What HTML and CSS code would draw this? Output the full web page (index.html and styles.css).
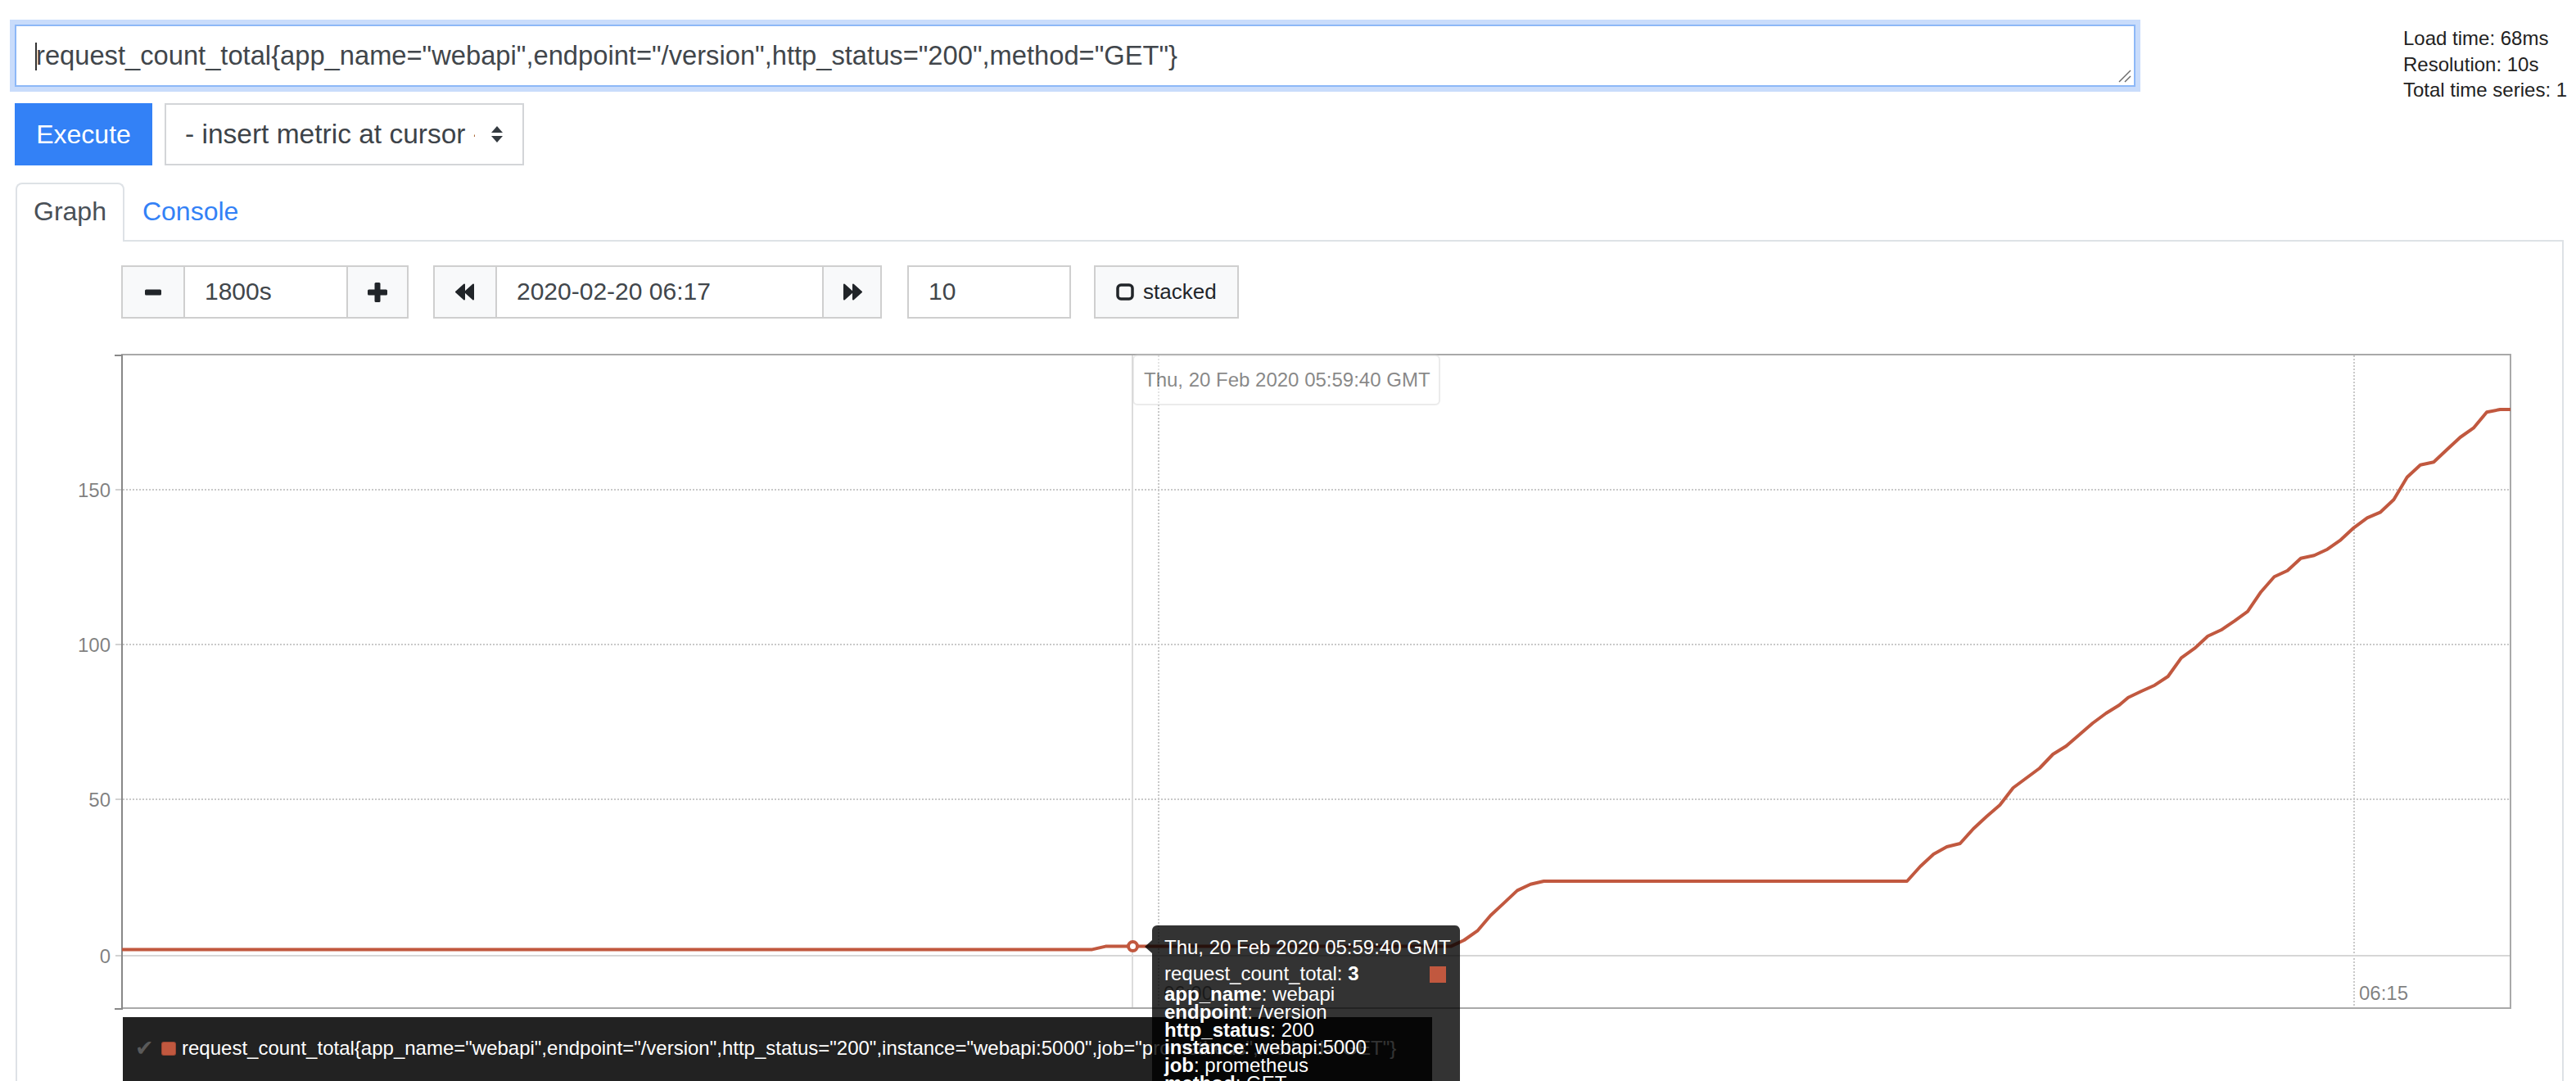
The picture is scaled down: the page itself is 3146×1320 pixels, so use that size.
FILE: index.html
```html
<!DOCTYPE html>
<html>
<head>
<meta charset="utf-8">
<title>Prometheus Time Series Collection and Processing Server</title>
<link rel="stylesheet" href="styles.css">
</head>
<body>
<div class="page">
  <div class="query-row">
    <div class="query-col">
      <div class="expr"><span class="caret"></span>request_count_total{app_name="webapi",endpoint="/version",http_status="200",method="GET"}<svg class="grip" width="18" height="18" viewBox="0 0 18 18"><line x1="2" y1="16" x2="16" y2="2" stroke="#6b6b6b" stroke-width="1.5"/><line x1="9" y1="16" x2="16" y2="9" stroke="#6b6b6b" stroke-width="1.5"/></svg></div>
      <div class="exec-row">
        <button class="btn-exec">Execute</button>
        <div class="metric-select">
          <span class="select-text">- insert metric at cursor -</span>
          <svg class="select-arrows" width="14" height="20" viewBox="0 0 14 20"><polygon points="7,0 14,8 0,8" fill="#343a40"/><polygon points="0,12 14,12 7,20" fill="#343a40"/></svg>
        </div>
      </div>
    </div>
    <div class="stats">
      <div>Load time: 68ms</div>
      <div>Resolution: 10s</div>
      <div>Total time series: 1</div>
    </div>
  </div>

  <div class="tabs">
    <div class="tab active">Graph</div>
    <div class="tab">Console</div>
  </div>

  <div class="tab-content">
    <div class="controls">
      <div class="group">
        <div class="ctl-btn btn-minus"><svg width="20" height="8" viewBox="0 0 20 8"><rect width="20" height="7" y="0.5" rx="1.5" fill="#212529"/></svg></div>
        <div class="ctl-input in-range">1800s</div>
        <div class="ctl-btn btn-plus"><svg width="24" height="24" viewBox="0 0 24 24"><rect x="8.5" y="0" width="7" height="24" rx="1.5" fill="#212529"/><rect x="0" y="8.5" width="24" height="7" rx="1.5" fill="#212529"/></svg></div>
      </div>
      <div class="group group-time">
        <div class="ctl-btn btn-back"><svg width="24" height="21" viewBox="0 0 24 21"><path d="M1 10.5 L11 1.5 L11 19.5 Z M12 10.5 L22 1.5 L22 19.5 Z" fill="#212529" stroke="#212529" stroke-width="2" stroke-linejoin="round"/></svg></div>
        <div class="ctl-input in-date">2020-02-20 06:17</div>
        <div class="ctl-btn btn-fwd"><svg width="24" height="21" viewBox="0 0 24 21"><path d="M23 10.5 L13 1.5 L13 19.5 Z M12 10.5 L2 1.5 L2 19.5 Z" fill="#212529" stroke="#212529" stroke-width="2" stroke-linejoin="round"/></svg></div>
      </div>
      <div class="ctl-input in-res">10</div>
      <div class="btn-stacked"><svg width="22" height="21" viewBox="0 0 22 21"><rect x="2" y="2" width="18" height="17" rx="4" fill="none" stroke="#212529" stroke-width="3.5"/></svg><span>stacked</span></div>
    </div>

    <div class="chart">
      <svg class="plot" width="3108" height="815" viewBox="21 420 3108 815">
        <rect x="149" y="433" width="2917" height="798" fill="none" stroke="#a9a9a9" stroke-width="2"/>
        <g stroke="#c9c9c9" stroke-width="2" stroke-dasharray="2 2">
          <line x1="150" y1="598" x2="3065" y2="598"/>
          <line x1="150" y1="787" x2="3065" y2="787"/>
          <line x1="150" y1="976" x2="3065" y2="976"/>
          <line x1="1415" y1="434" x2="1415" y2="1230"/>
          <line x1="2875" y1="434" x2="2875" y2="1230"/>
        </g>
        <line x1="150" y1="1167" x2="3065" y2="1167" stroke="#d6d6d6" stroke-width="2"/>
        <line x1="1383" y1="434" x2="1383" y2="1230" stroke="#dcdcdc" stroke-width="2"/>
        <g stroke="#d2d2d2" stroke-width="2">
          <line x1="141" y1="598" x2="149" y2="598"/>
          <line x1="141" y1="787" x2="149" y2="787"/>
          <line x1="141" y1="976" x2="149" y2="976"/>
          <line x1="141" y1="1167" x2="149" y2="1167"/>
        </g>
        <g stroke="#888" stroke-width="2">
          <line x1="149" y1="433" x2="149" y2="1233"/>
          <line x1="140" y1="434" x2="149" y2="434"/>
          <line x1="140" y1="1232" x2="149" y2="1232"/>
        </g>
        <g class="ylab" text-anchor="end">
          <text x="135" y="606.6">150</text>
          <text x="135" y="795.6">100</text>
          <text x="135" y="984.6">50</text>
          <text x="135" y="1175.6">0</text>
        </g>
        <g class="xlab">
          <text x="1421" y="1221">06:00</text>
          <text x="2881" y="1221">06:15</text>
        </g>
        <polyline fill="none" stroke="#c1583f" stroke-width="4" stroke-linejoin="round" points="149,1159.4 1333.9,1159.4 1350.2,1155.6 1771.9,1155.6 1788.1,1148 1804.3,1136.7 1820.5,1117.7 1836.8,1102.6 1853,1087.4 1869.2,1079.8 1885.4,1076 2329,1076 2345.2,1058 2361.4,1043 2377.6,1034 2393.8,1030 2410,1012 2426.2,997 2442.4,983 2458.6,962 2474.8,950 2491,938 2507.2,921 2523.4,911 2539.6,897 2555.8,883 2572,871 2588.2,861 2599.1,851.7 2615.3,844 2631.5,836.7 2647.7,826 2663.9,803.3 2680.2,791.7 2696.4,776.7 2712.6,769.3 2728.8,758.3 2745,746.7 2761.3,722.7 2777.5,704.3 2793.7,696.7 2809.9,681.7 2826.2,678.3 2842.4,670.7 2858.6,659.3 2874.8,644.3 2891,632.3 2907.3,625.3 2923.5,610 2939.7,582.7 2955.9,567.7 2972.2,564.3 2988.4,549 3004.6,534 3020.8,522.7 3037,503.3 3053.3,500 3066,500"/>
      </svg>

      <div class="legend"><span class="check">✔</span><span class="lswatch"></span><span class="ltext">request_count_total{app_name="webapi",endpoint="/version",http_status="200",instance="webapi:5000",job="prometheus",method="GET"}</span></div>

      <div class="x-label">Thu, 20 Feb 2020 05:59:40 GMT</div>
      <div class="dot"></div>
      <div class="tip">
        <div class="tip-arrow"></div>
        <div class="tip-date">Thu, 20 Feb 2020 05:59:40 GMT</div>
        <div class="tip-series"><span class="tip-swatch"></span>request_count_total: <b>3</b></div>
        <div class="tip-labels">
          <div><b>app_name</b>: webapi</div>
          <div><b>endpoint</b>: /version</div>
          <div><b>http_status</b>: 200</div>
          <div><b>instance</b>: webapi:5000</div>
          <div><b>job</b>: prometheus</div>
          <div><b>method</b>: GET</div>
        </div>
      </div>
    </div>
  </div>
</div>
</body>
</html>
```

FILE: styles.css
```css
* { box-sizing: border-box; }
html, body { margin: 0; padding: 0; background: #fff; }
body {
  font-family: "Liberation Sans", Arial, sans-serif;
  color: #212529;
  overflow: hidden;
}
.page { padding: 30px 15px 0 18px; }

/* query */
.query-row { display: flex; align-items: flex-start; }
.query-col { width: 2590px; flex: none; }
.expr {
  position: relative;
  height: 76px;
  border: 2px solid #8db8f7;
  box-shadow: 0 0 0 6px #c9dcfb;
  padding: 12px 24px;
  font-size: 32.7px;
  line-height: 48px;
  color: #41464b;
  white-space: nowrap;
  overflow: hidden;
}
.caret {
  position: absolute;
  left: 23px;
  top: 20px;
  width: 2px;
  height: 34px;
  background: #333;
}
.grip { position: absolute; right: 2px; bottom: 2px; }

.exec-row { display: flex; margin-top: 20px; height: 76px; }
.btn-exec {
  width: 168px;
  height: 76px;
  padding: 0;
  border: 0;
  border-radius: 0;
  background: #3381f6;
  color: #fff;
  font-family: "Liberation Sans", Arial, sans-serif;
  font-size: 32px;
}
.metric-select {
  margin-left: 15px;
  width: 439px;
  height: 76px;
  border: 2px solid #d3d5d8;
  display: flex;
  align-items: center;
  padding-left: 23px;
  font-size: 33.5px;
  color: #3d4349;
}
.select-text { width: 354px; overflow: hidden; white-space: nowrap; flex: none; }
.select-arrows { margin-left: 20px; flex: none; }

.stats {
  margin-left: 327px;
  margin-top: 1px;
  font-size: 24px;
  line-height: 31.5px;
  color: #222;
  white-space: nowrap;
}

/* tabs */
.tabs {
  display: flex;
  margin: 21px 0 0 1px;
  height: 72px;
  border-bottom: 2px solid #dee2e6;
}
.tab {
  height: 72px;
  padding: 0 20px;
  border: 2px solid transparent;
  border-bottom: 0;
  border-radius: 8px 8px 0 0;
  font-size: 32px;
  line-height: 66px;
  color: #3381f6;
}
.tab.active {
  border-color: #dee2e6;
  background: #fff;
  color: #495057;
  margin-bottom: -2px;
  position: relative;
}
.tab-content {
  margin-left: 1px;
  border-left: 2px solid #dee2e6;
  border-right: 2px solid #dee2e6;
  padding-top: 29px;
  min-height: 1100px;
}

/* controls */
.controls { display: flex; margin-left: 127px; height: 65px; }
.group { display: flex; }
.group-time { margin-left: 30px; }
.ctl-btn {
  height: 65px;
  background: #f8f9fa;
  border: 2px solid #cfcfcf;
  display: flex;
  align-items: center;
  justify-content: center;
}
.ctl-btn + .ctl-input, .ctl-input + .ctl-btn { margin-left: -2px; }
.btn-minus { width: 78px; }
.btn-plus { width: 76px; }
.btn-back { width: 78px; }
.btn-fwd { width: 73px; }
.ctl-input {
  height: 65px;
  border: 2px solid #cfcfcf;
  background: #fff;
  padding-left: 24px;
  font-size: 30px;
  line-height: 59px;
  color: #41464b;
}
.in-range { width: 201px; }
.in-date { width: 401px; }
.in-res { width: 200px; margin-left: 31px; }
.btn-stacked {
  margin-left: 28px;
  width: 177px;
  height: 65px;
  background: #f8f9fa;
  border: 2px solid #cfcfcf;
  display: flex;
  align-items: center;
  padding-left: 25px;
  font-size: 26px;
  color: #212529;
}
.btn-stacked span { margin-left: 11px; }

/* chart */
.chart { position: relative; margin-top: 31px; }
.plot { display: block; }
.ylab text, .xlab text {
  font-family: "Liberation Sans", Arial, sans-serif;
  font-size: 24px;
  fill: #000;
  fill-opacity: 0.5;
}
.legend {
  margin: 7px 0 0 129px;
  width: 1599px;
  background: #222;
  color: #fff;
  padding: 24px 0 40px 15px;
  font-size: 24px;
  line-height: 28px;
  white-space: nowrap;
  display: flex;
  align-items: center;
}
.check { color: #5a5a5a; font-family: "DejaVu Sans", sans-serif; font-size: 27px; width: 22px; }
.lswatch {
  width: 18px;
  height: 17px;
  margin: 0 7px 0 10px;
  background: #c1583f;
  border-radius: 3px;
  border: 1px solid rgba(0,0,0,0.2);
}

.x-label {
  position: absolute;
  left: 1362px;
  top: 13px;
  width: 376px;
  height: 62px;
  padding-left: 12px;
  background: #fff;
  border: 2px solid #d8d8d8;
  border-radius: 6px;
  opacity: 0.5;
  color: #111;
  font-size: 24px;
  line-height: 58px;
  white-space: nowrap;
}
.dot {
  position: absolute;
  left: 1355px;
  top: 728px;
  width: 15px;
  height: 15px;
  border-radius: 50%;
  background: #fff;
  border: 4px solid #c1583f;
}
.tip {
  position: absolute;
  left: 1386px;
  top: 710px;
  width: 376px;
  height: 240px;
  padding: 13px 17px 0 15px;
  background: rgba(0,0,0,0.8);
  border-radius: 6px;
  color: #fff;
  font-size: 24px;
  line-height: 28px;
  white-space: nowrap;
  z-index: 2;
}
.tip-arrow {
  position: absolute;
  left: -9px;
  top: 18px;
  width: 0;
  height: 0;
  border-top: 8px solid transparent;
  border-bottom: 8px solid transparent;
  border-right: 9px solid rgba(0,0,0,0.8);
}
.tip-series { margin-top: 4px; }
.tip-swatch {
  float: right;
  width: 20px;
  height: 20px;
  margin-top: 5px;
  background: #c1583f;
}
.tip-labels { line-height: 21.8px; }
.tip-labels b, .tip-series b { font-weight: bold; }
```
